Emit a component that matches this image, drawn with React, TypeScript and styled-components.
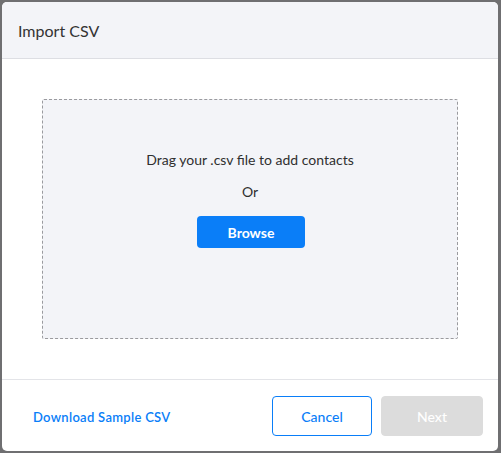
import styled, { createGlobalStyle } from "styled-components";

const GlobalStyle = createGlobalStyle`
  html, body {
    margin: 0;
    padding: 0;
    background: #6f6f71;
    font-family: Lato, "Open Sans", sans-serif;
  }
  * {
    box-sizing: border-box;
  }
`;

const Page = styled.div`
  width: 501px;
  height: 453px;
  padding: 2px 3px 2px 2px;
`;

const Modal = styled.div`
  display: flex;
  flex-direction: column;
  width: 496px;
  height: 449px;
  background: #ffffff;
  border-radius: 5px;
  overflow: hidden;
`;

const Header = styled.div`
  display: flex;
  align-items: center;
  height: 57px;
  padding: 0 16px;
  background: #f3f4f8;
  border-bottom: 1px solid #dddee3;
`;

const Title = styled.h2`
  margin: 0;
  font-size: 16px;
  font-weight: 400;
  color: #333333;
`;

const Body = styled.div`
  padding: 40px;
  border-bottom: 1px solid #e3e4e8;
`;

const DropZone = styled.div`
  display: flex;
  flex-direction: column;
  align-items: center;
  height: 240px;
  padding-top: 51px;
  background: #f3f4f8;
  border: 1px dashed #9a9a9e;
  border-radius: 2px;
`;

const Hint = styled.p`
  margin: 0;
  font-size: 14px;
  line-height: 18px;
  color: #2f2f2f;
`;

const Or = styled(Hint)`
  margin-top: 14px;
`;

const Browse = styled.button`
  margin: 15px 0 0 2px;
  width: 108px;
  height: 32px;
  border: none;
  border-radius: 4px;
  background: #0a7ef8;
  color: #ffffff;
  font-family: inherit;
  font-size: 14px;
  font-weight: 700;
`;

const Footer = styled.div`
  flex: 1;
  display: flex;
  align-items: center;
  padding: 0 15px 0 31px;
  gap: 9px;
`;

const DownloadLink = styled.a`
  margin-right: auto;
  padding-top: 2px;
  font-size: 13px;
  font-weight: 600;
  letter-spacing: 0.3px;
  color: #0a7ef8;
  text-decoration: none;
  cursor: pointer;
`;

const FooterButton = styled.button<{ $variant: "outline" | "disabled" }>`
  width: ${({ $variant }) => ($variant === "outline" ? "100px" : "102px")};
  height: 40px;
  padding-top: 2px;
  border-radius: 4px;
  font-family: inherit;
  font-size: 14px;
  font-weight: 500;
  border: 1px solid
    ${({ $variant }) => ($variant === "outline" ? "#0a7ef8" : "#dcdcdc")};
  background: ${({ $variant }) =>
    $variant === "outline" ? "#ffffff" : "#dcdcdc"};
  color: ${({ $variant }) => ($variant === "outline" ? "#0a7ef8" : "#ffffff")};
`;

export default function App() {
  return (
    <>
      <GlobalStyle />
      <Page>
        <Modal>
          <Header>
            <Title>Import CSV</Title>
          </Header>
          <Body>
            <DropZone>
              <Hint>Drag your .csv file to add contacts</Hint>
              <Or>Or</Or>
              <Browse>Browse</Browse>
            </DropZone>
          </Body>
          <Footer>
            <DownloadLink>Download Sample CSV</DownloadLink>
            <FooterButton $variant="outline">Cancel</FooterButton>
            <FooterButton $variant="disabled" disabled>
              Next
            </FooterButton>
          </Footer>
        </Modal>
      </Page>
    </>
  );
}
